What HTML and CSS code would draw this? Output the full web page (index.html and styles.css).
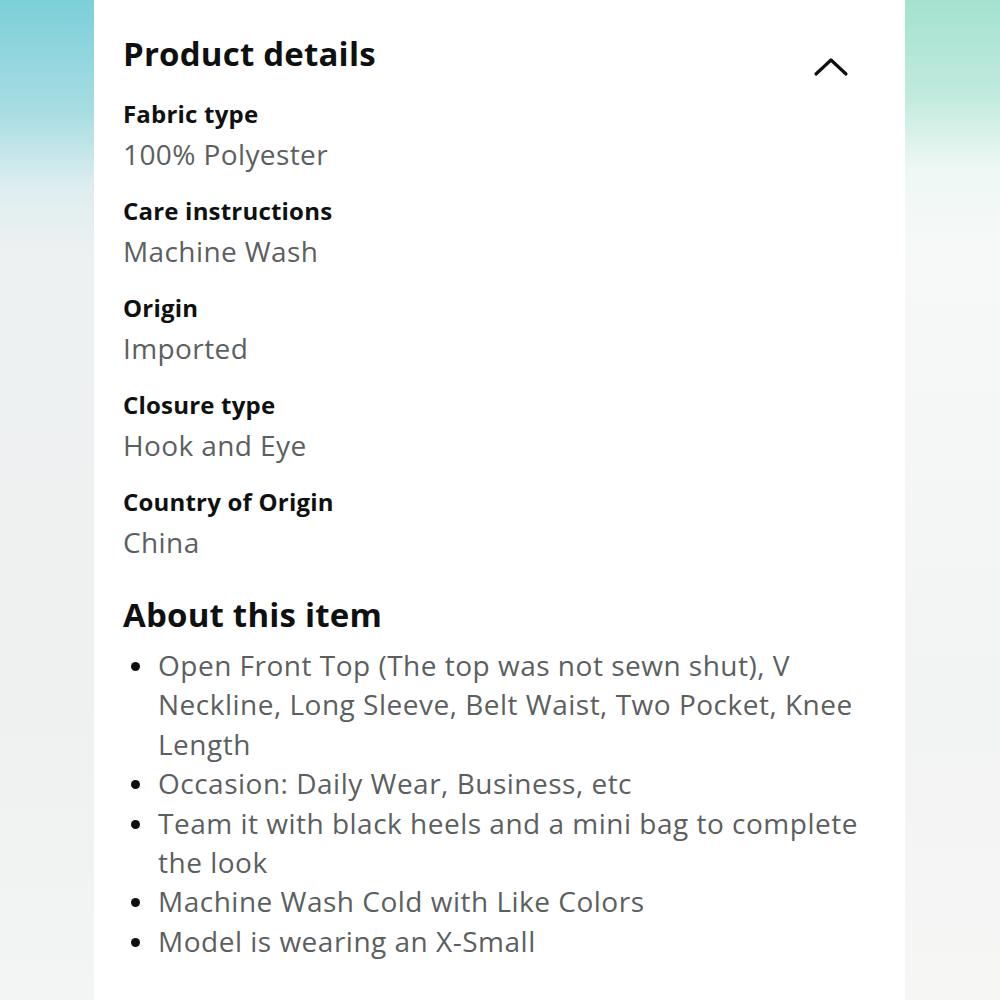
FILE: index.html
```html
<!DOCTYPE html>
<html>
<head>
<meta charset="utf-8">
<link rel="stylesheet" href="styles.css">
</head>
<body>
<div class="frame">
  <div class="side side-left"></div>
  <main class="panel">
    <div class="head">
      <h2 class="title">Product details</h2>
      <svg class="chevron" width="36" height="22" viewBox="0 0 36 22"><path d="M3 18 L18 4 L33 18" fill="none" stroke="#0f1111" stroke-width="3.2" stroke-linecap="round" stroke-linejoin="round"/></svg>
    </div>
    <dl class="details">
      <div class="row"><dt>Fabric type</dt><dd>100% Polyester</dd></div>
      <div class="row"><dt>Care instructions</dt><dd>Machine Wash</dd></div>
      <div class="row"><dt>Origin</dt><dd>Imported</dd></div>
      <div class="row"><dt>Closure type</dt><dd>Hook and Eye</dd></div>
      <div class="row"><dt>Country of Origin</dt><dd>China</dd></div>
    </dl>
    <h2 class="title about">About this item</h2>
    <ul class="bullets">
      <li>Open Front Top (The top was not sewn shut), V Neckline, Long Sleeve, Belt Waist, Two Pocket, Knee Length</li>
      <li>Occasion: Daily Wear, Business, etc</li>
      <li>Team it with black heels and a mini bag to complete the look</li>
      <li>Machine Wash Cold with Like Colors</li>
      <li>Model is wearing an X-Small</li>
    </ul>
  </main>
  <div class="side side-right"></div>
</div>
</body>
</html>
```
FILE: styles.css
```css
html, body { margin: 0; padding: 0; }
body { font-family: "Open Sans", "Liberation Sans", sans-serif; color: #0f1111; }
.frame { display: flex; width: 1000px; height: 1000px; overflow: hidden; }
.side { width: 94px; flex: none; }
.side-left { background: linear-gradient(to bottom, #7ccfd9 0px, #a6dde2 110px, #dfeef0 190px, #eef1f1 260px, #eff1f1 700px, #f3f4f4 1000px); }
.side-right { width: 95px; background: linear-gradient(to bottom, #a4e2cf 0px, #bfe9dc 90px, #eef8f4 170px, #f7f9f9 260px, #f2f3f3 700px, #f6f6f5 1000px); }
.panel { flex: 1; background: #ffffff; padding: 32px 0 0 29px; box-sizing: border-box; }
.head { display: flex; align-items: flex-start; justify-content: space-between; padding-right: 56px; }
.title { margin: 0; font-size: 33px; font-weight: 700; line-height: 44px; letter-spacing: 0.2px; color: #0f1111; }
.chevron { margin-top: 24px; }
.details { margin: 18px 0 0 0; }
.row { margin-bottom: 17px; }
dt { font-size: 24px; font-weight: 700; line-height: 36px; letter-spacing: 0.2px; color: #0f1111; }
dd { margin: 0; font-size: 28px; line-height: 44px; letter-spacing: 0.4px; color: #5c5f5f; }
.about { margin-top: 29px; }
.bullets { margin: 9px 0 0 0; padding: 0 40px 0 35px; list-style: none; }
.bullets li { position: relative; font-size: 28px; line-height: 39.4px; letter-spacing: 0.5px; color: #5c5f5f; }
.bullets li::before { content: ""; position: absolute; left: -27px; top: 16px; width: 9px; height: 9px; border-radius: 50%; background: #0f1111; }
```
